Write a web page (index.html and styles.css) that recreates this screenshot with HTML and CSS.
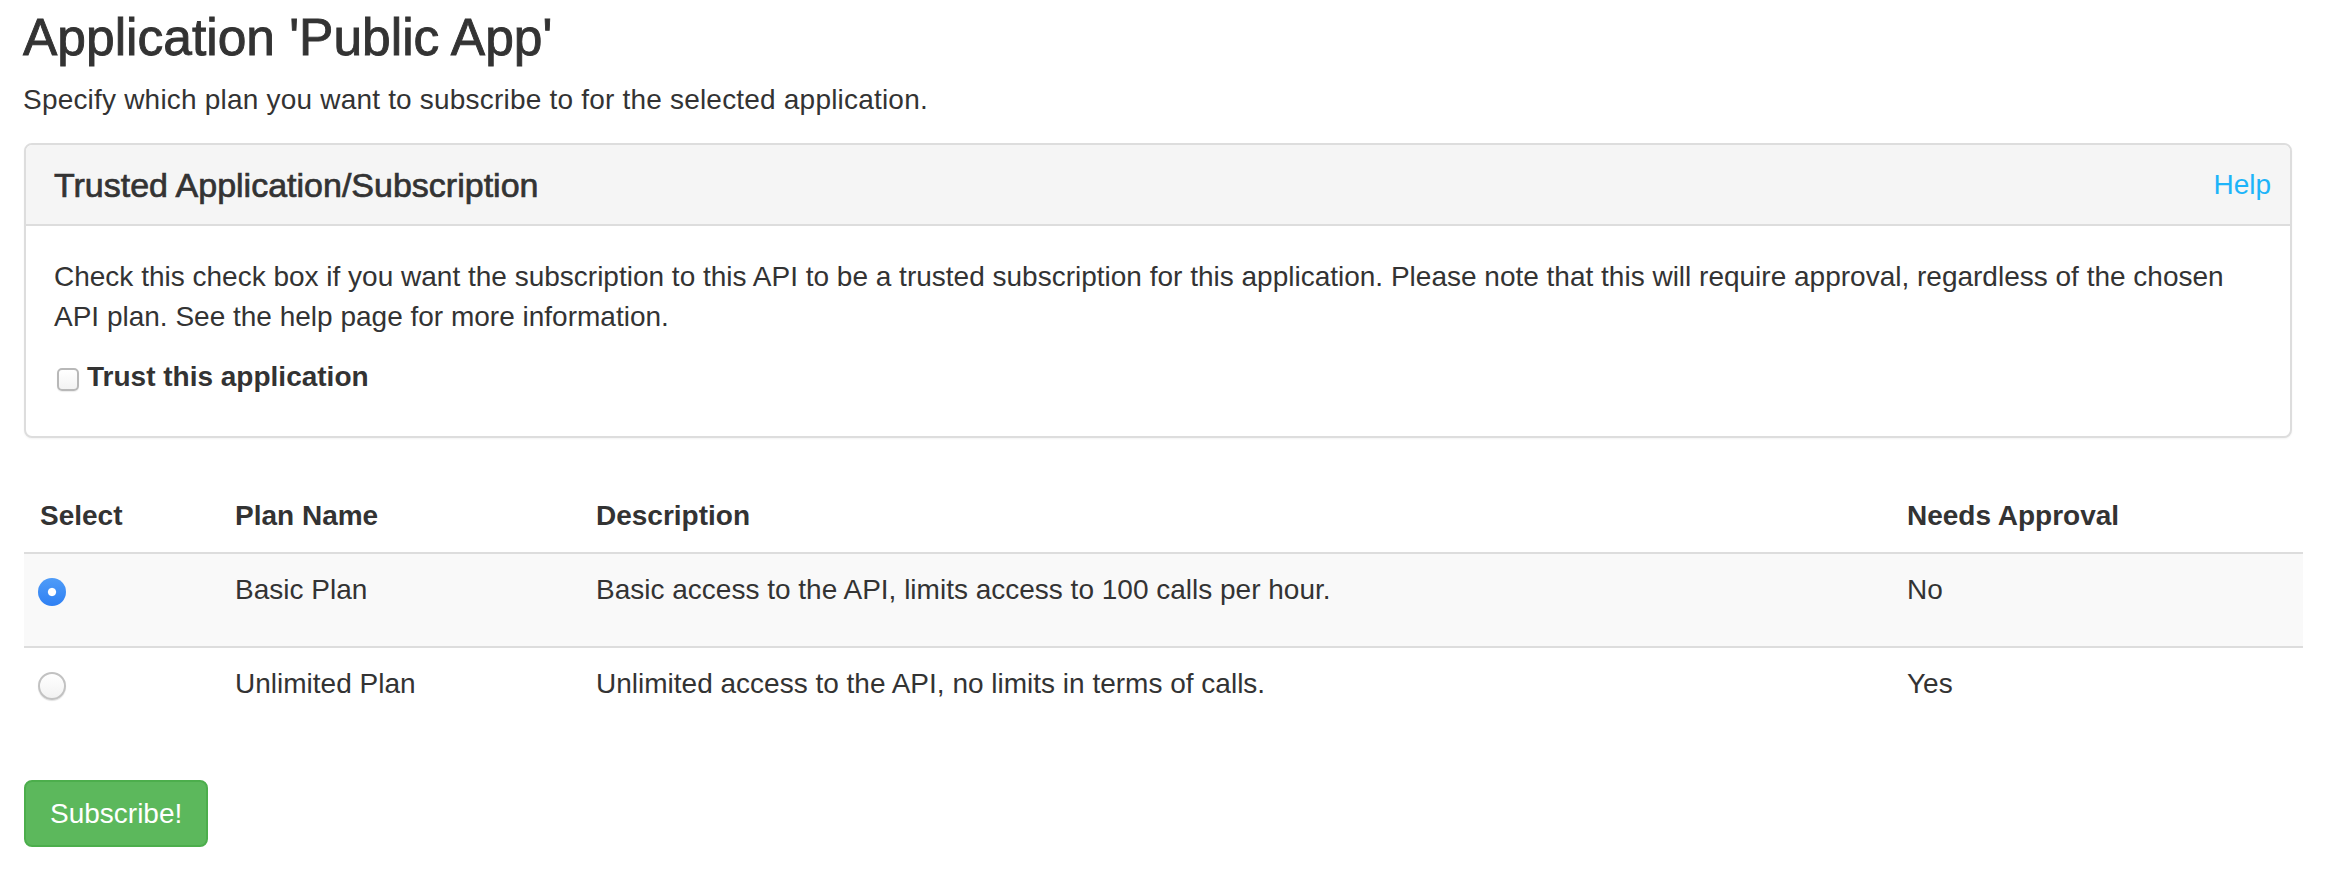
FILE: index.html
```html
<!DOCTYPE html>
<html lang="en">
<head>
<meta charset="utf-8">
<title>Application 'Public App'</title>
<link rel="stylesheet" href="styles.css">
</head>
<body>
<div class="page">
  <h3 class="title">Application 'Public App'</h3>
  <p class="intro">Specify which plan you want to subscribe to for the selected application.</p>

  <div class="panel">
    <div class="panel-heading">
      <span class="panel-title">Trusted Application/Subscription</span>
      <a class="help" href="#">Help</a>
    </div>
    <div class="panel-body">
      <p class="panel-text">Check this check box if you want the subscription to this API to be a trusted subscription for this application. Please note that this will require approval, regardless of the chosen API plan. See the help page for more information.</p>
      <label class="check"><input type="checkbox" class="checkbox">Trust this application</label>
    </div>
  </div>

  <table class="plans">
    <colgroup>
      <col class="c-select">
      <col class="c-name">
      <col class="c-desc">
      <col class="c-appr">
    </colgroup>
    <thead>
      <tr>
        <th>Select</th>
        <th>Plan Name</th>
        <th>Description</th>
        <th>Needs Approval</th>
      </tr>
    </thead>
    <tbody>
      <tr class="striped">
        <td><div class="radio-cell"><input type="radio" name="plan" class="radio" checked></div></td>
        <td>Basic Plan</td>
        <td>Basic access to the API, limits access to 100 calls per hour.</td>
        <td>No</td>
      </tr>
      <tr>
        <td><div class="radio-cell"><input type="radio" name="plan" class="radio"></div></td>
        <td>Unlimited Plan</td>
        <td>Unlimited access to the API, no limits in terms of calls.</td>
        <td>Yes</td>
      </tr>
    </tbody>
  </table>

  <button class="btn-success" type="button">Subscribe!</button>
</div>
</body>
</html>
```

FILE: styles.css
```css
* { box-sizing: border-box; }

html, body {
  margin: 0;
  padding: 0;
  background: #fff;
}

body {
  font-family: "Liberation Sans", Arial, Helvetica, sans-serif;
  font-size: 28px;
  line-height: 40px;
  color: #333;
}

.page {
  padding: 10px 0 0 24px;
  width: 2303px;
}

.title {
  margin: 0 0 15px -1px;
  font-size: 51.5px;
  line-height: 55px;
  font-weight: normal;
  color: #333;
  -webkit-text-stroke: 0.9px #333;
}

.intro {
  margin: 0 0 23px -1px;
  letter-spacing: 0.2px;
}

.panel {
  width: 2268px;
  border: 2px solid #ddd;
  border-radius: 8px;
  background: #fff;
  box-shadow: 0 1px 2px rgba(0, 0, 0, 0.05);
}

.panel-heading {
  height: 81px;
  display: flex;
  align-items: center;
  justify-content: space-between;
  padding: 0 19px 0 28px;
  background: #f5f5f5;
  border-bottom: 2px solid #ddd;
  border-radius: 6px 6px 0 0;
}

.panel-title {
  font-size: 34px;
  line-height: 38px;
  color: #333;
  -webkit-text-stroke: 0.7px #333;
  padding-top: 1px;
}

.help {
  color: #1db4f9;
  text-decoration: none;
  font-size: 28px;
  line-height: 40px;
}

.panel-body {
  padding: 31px 28px 39px 28px;
}

.panel-text {
  margin: 0 0 20px 0;
}

.check {
  display: flex;
  align-items: center;
  font-weight: bold;
  height: 40px;
  padding-left: 3px;
}

.checkbox {
  -webkit-appearance: none;
  appearance: none;
  flex: none;
  width: 22px;
  height: 23px;
  margin: 5px 8px 0 0;
  border: 2px solid #b8b8b8;
  border-radius: 5px;
  background: linear-gradient(#ffffff, #f3f3f3);
  box-shadow: 0 1px 1px rgba(0, 0, 0, 0.08);
}

.plans {
  margin-top: 42px;
  width: 2279px;
  border-collapse: collapse;
  table-layout: fixed;
}

.c-select { width: 195px; }
.c-name { width: 361px; }
.c-desc { width: 1311px; }
.c-appr { width: 412px; }

.plans th {
  text-align: left;
  font-weight: bold;
  padding: 16px;
  border-bottom: 2px solid #ddd;
  vertical-align: bottom;
}

.plans td {
  padding: 16px;
  border-top: 2px solid #ddd;
  vertical-align: top;
}

.plans tr.striped td {
  background: #f9f9f9;
}

.radio-cell {
  height: 60px;
  padding-top: 8px;
}

.radio {
  -webkit-appearance: none;
  appearance: none;
  display: block;
  width: 28px;
  height: 28px;
  margin: 0 0 0 -2px;
  border-radius: 50%;
  border: 2px solid #c2c2c2;
  background: linear-gradient(#ffffff, #f2f2f2);
  box-shadow: 0 1px 1px rgba(0, 0, 0, 0.12);
}

.radio:checked {
  border: none;
  background:
    radial-gradient(circle at 50% 50%, #ffffff 0, #ffffff 3.6px, rgba(255,255,255,0) 4.6px),
    linear-gradient(#4f9cf8, #2f80f3);
  box-shadow: none;
}

.btn-success {
  display: block;
  margin-top: 40px;
  height: 67px;
  padding: 0 24px;
  font-family: "Liberation Sans", Arial, Helvetica, sans-serif;
  font-size: 28px;
  line-height: 40px;
  color: #fff;
  background: #5cb85c;
  border: 2px solid #4cae4c;
  border-radius: 8px;
  cursor: pointer;
}
```
